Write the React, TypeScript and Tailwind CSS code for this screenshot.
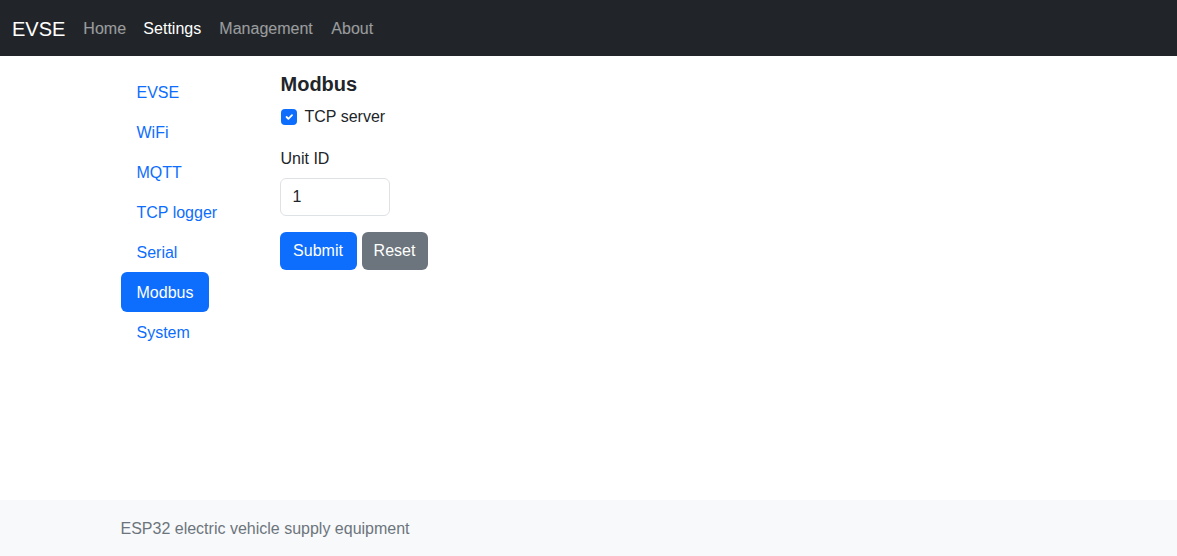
import React from "react";

const sideItems = ["EVSE", "WiFi", "MQTT", "TCP logger", "Serial", "Modbus", "System"];

const topLinks = [
  { label: "Home", w: "w-[60px]" },
  { label: "Settings", w: "w-[76px]", active: true },
  { label: "Management", w: "w-[112px]" },
  { label: "About", w: "w-[61px]" },
];

export default function App() {
  return (
    <div
      className="min-h-screen flex flex-col bg-white text-[#212529]"
      style={{ fontFamily: '"Liberation Sans", Arial, sans-serif' }}
    >
      <nav className="h-14 bg-[#212529] flex items-center px-3">
        <a href="#" className="text-xl leading-[30px] text-white mr-[10px] py-[5px] mt-[2px]">EVSE</a>
        <div className="flex items-center mt-[2px]">
          {topLinks.map((l) => (
            <a
              key={l.label}
              href="#"
              className={`${l.w} pl-2 py-2 text-base leading-6 whitespace-nowrap ${l.active ? "text-white" : "text-white/55"}`}
            >
              {l.label}
            </a>
          ))}
        </div>
      </nav>

      <main className="w-[960px] mx-auto px-3 mt-4">
        <div className="flex">
          <div className="w-[136px] flex flex-col mr-6">
            {sideItems.map((s) => (
              <a
                key={s}
                href="#"
                className={`px-4 pt-[9px] pb-[7px] leading-6 text-base rounded-md w-fit ${
                  s === "Modbus" ? "bg-[#0d6efd] text-white" : "text-[#0d6efd]"
                }`}
              >
                {s}
              </a>
            ))}
          </div>
          <div className="flex-1">
            <h5 className="text-xl font-semibold leading-6 mb-[9px]">Modbus</h5>
            <div className="flex items-center gap-2 h-6 mb-[18px]">
              <span className="w-4 h-4 rounded bg-[#0d6efd] flex items-center justify-center">
                <svg width="12" height="12" viewBox="0 0 20 20" fill="none">
                  <path d="M6 10l3 3 6-6" stroke="#fff" strokeWidth="3" strokeLinecap="round" strokeLinejoin="round" />
                </svg>
              </span>
              <label className="text-base">TCP server</label>
            </div>
            <label className="block leading-6 mt-[1px] mb-[7px]">Unit ID</label>
            <input
              defaultValue="1"
              className="block w-[110px] h-[38px] px-3 border border-[#dee2e6] rounded-md text-base text-[#212529] outline-none mb-4 -ml-px"
            />
            <div className="flex gap-[5px] -ml-px">
              <button className="h-[38px] w-[77px] rounded-md bg-[#0d6efd] text-white text-base">Submit</button>
              <button className="h-[38px] w-[66px] rounded-md bg-[#6c757d] text-white text-base">Reset</button>
            </div>
          </div>
        </div>
      </main>

      <footer className="mt-auto bg-[#f8f9fa] pt-[17px] pb-[15px]">
        <div className="w-[960px] mx-auto px-3">
          <span className="text-[#6c757d] leading-6">ESP32 electric vehicle supply equipment</span>
        </div>
      </footer>
    </div>
  );
}
